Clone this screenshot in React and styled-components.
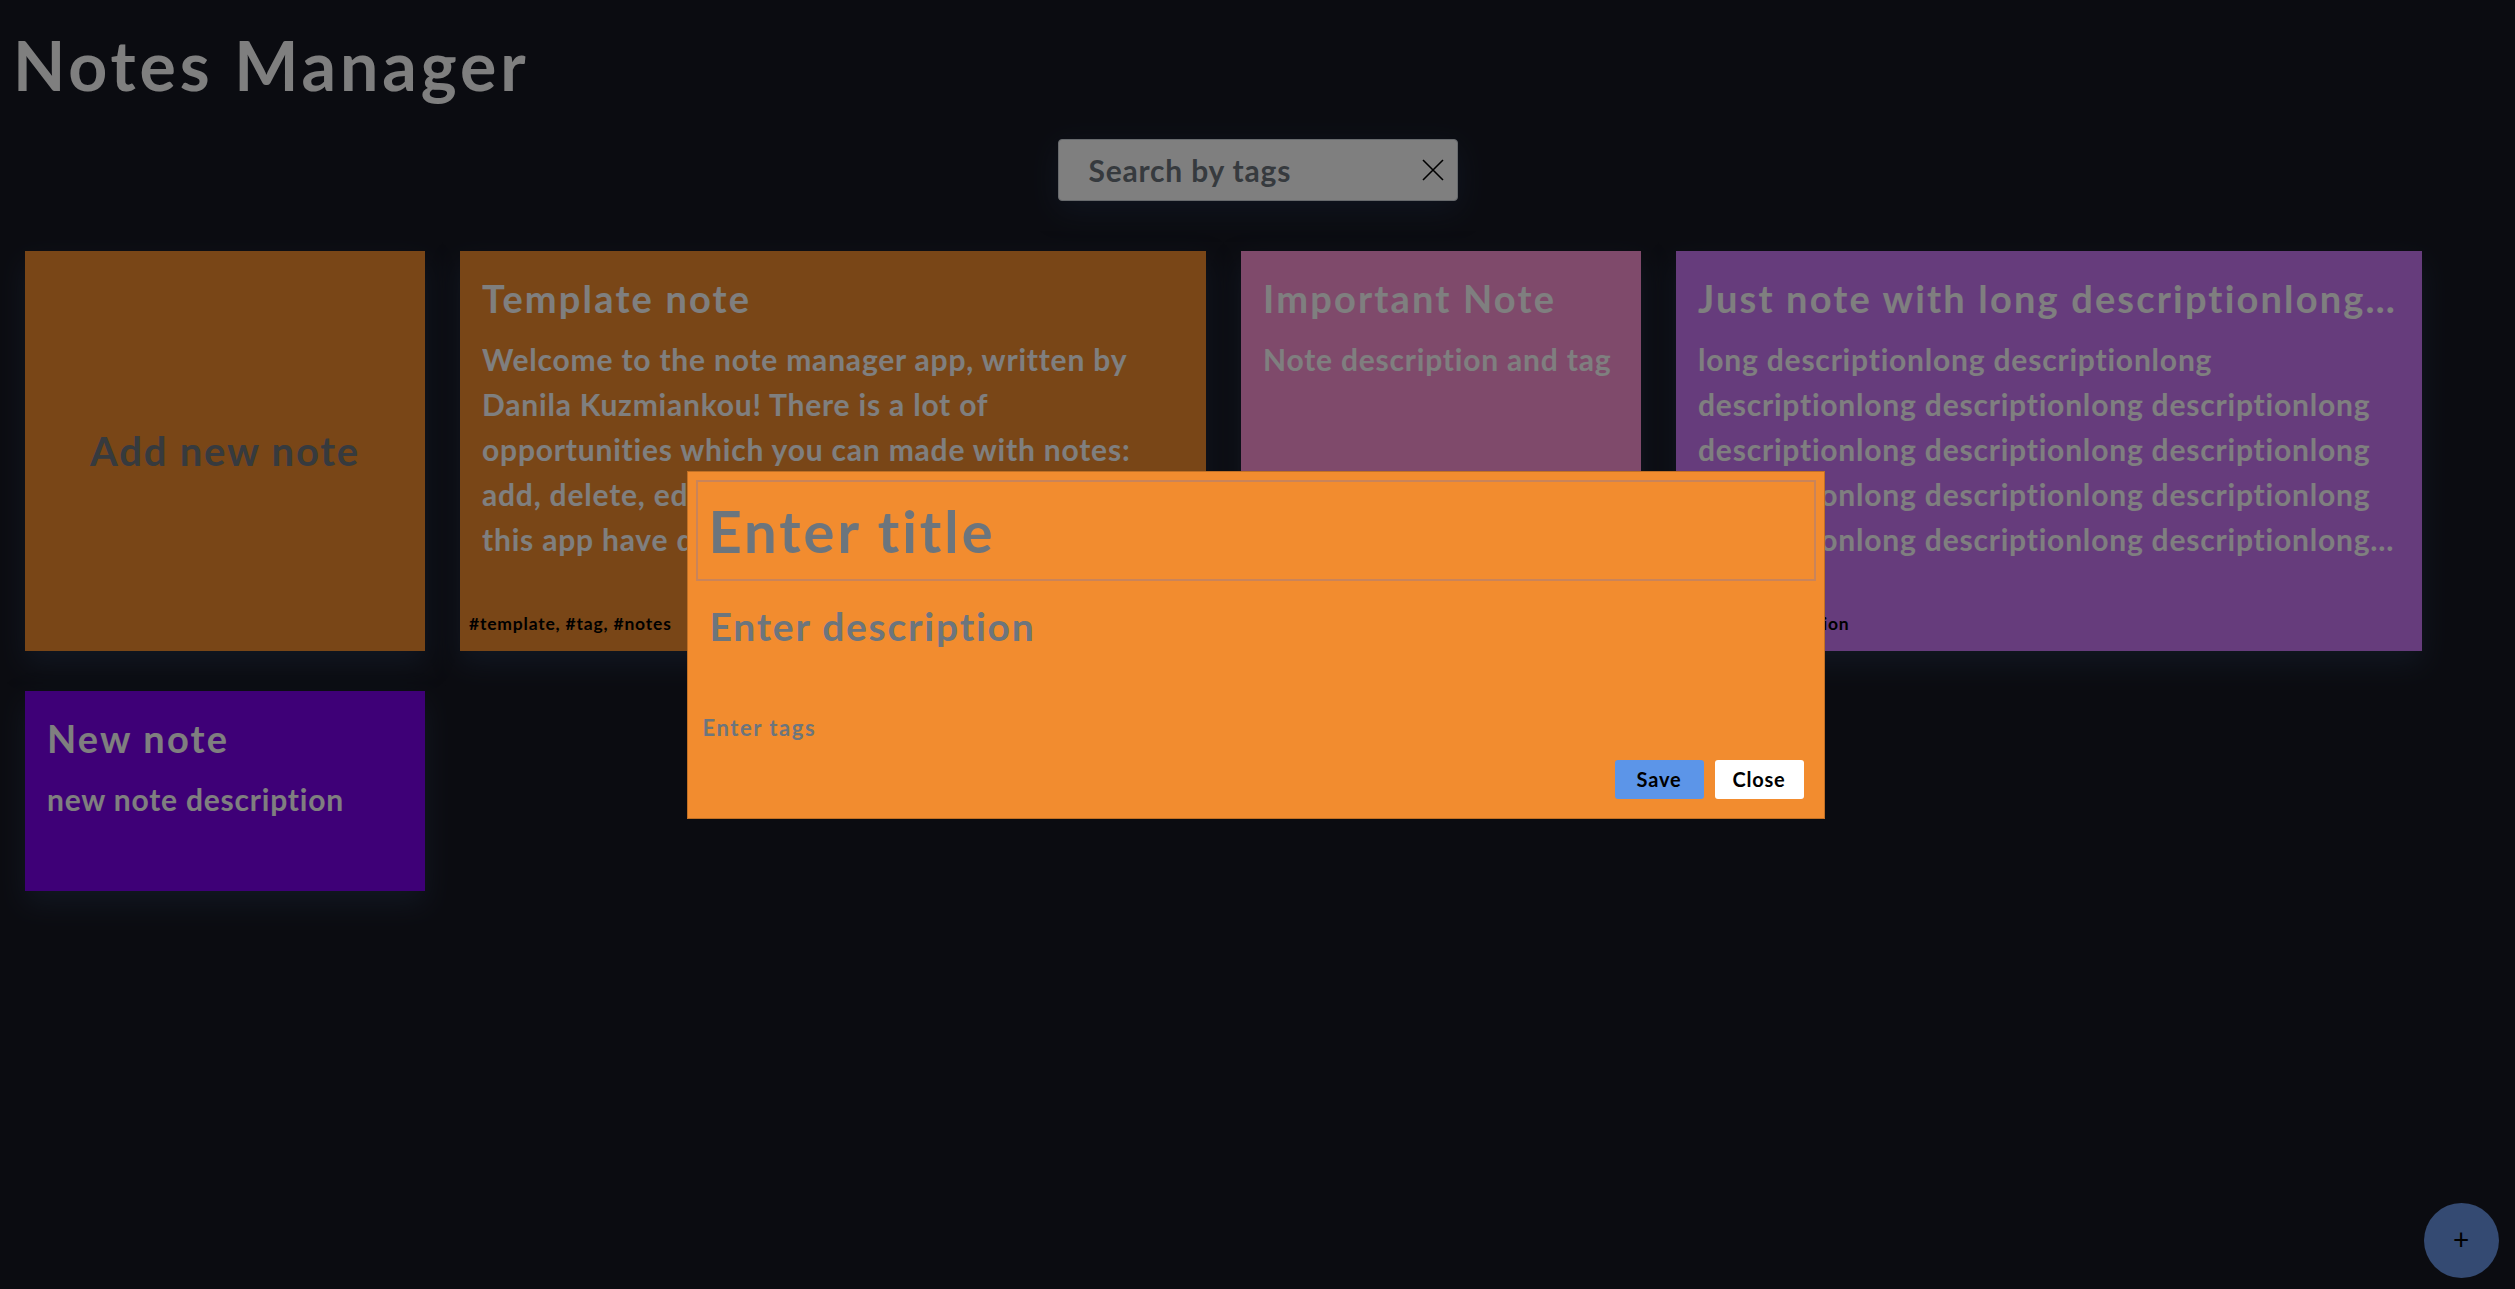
import React from "react";
import styled, { createGlobalStyle } from "styled-components";

const GlobalStyle = createGlobalStyle`
  * { box-sizing: border-box; }
  html, body {
    margin: 0;
    background: #171923;
  }
  body {
    min-height: 100vh;
    font-family: Lato, "Open Sans", sans-serif;
    font-weight: 700;
    letter-spacing: 0.05em;
  }
  input, textarea, button {
    font-family: inherit;
    letter-spacing: inherit;
  }
`;

const notes = [
  {
    id: 1,
    title: "Template note",
    description:
      "Welcome to the note manager app, written by Danila Kuzmiankou! There is a lot of opportunities which you can made with notes: add, delete, edit and filter them by the tags. Also this app have dark theme and many other features which will make your life easier.",
    tags: ["template", "tag", "notes"],
    color: "#f28c2f",
  },
  {
    id: 2,
    title: "Important Note",
    description: "Note description and tag",
    tags: [],
    color: "#fe94d6",
  },
  {
    id: 3,
    title: "Just note with long description" + "long description".repeat(6),
    description: "long description".repeat(24),
    tags: ["long", "description"],
    color: "#cc78f8",
  },
  {
    id: 4,
    title: "New note",
    description: "new note description",
    tags: [],
    color: "#7c00ee",
  },
];

const Page = styled.div`
  padding-bottom: 40px;
`;

const Heading = styled.h1`
  margin: 24px 0 0 13px;
  font-size: 68px;
  line-height: 1.2;
  font-weight: 700;
  letter-spacing: 0.058em;
  color: #fff;
`;

const SearchBar = styled.div`
  width: 400px;
  height: 62px;
  margin: 33px auto 0;
  display: flex;
  align-items: center;
  padding: 0 13px 0 28px;
  background: #fff;
  border: 1px solid #ced4da;
  border-radius: 4px;
  box-shadow: 0 8px 30px rgba(50, 75, 120, 0.35);
`;

const SearchField = styled.input`
  flex: 1;
  min-width: 0;
  border: none;
  outline: none;
  background: transparent;
  font-weight: 700;
  font-size: 30px;
  color: #343a40;

  &::placeholder {
    color: #6c757d;
  }
`;

const ClearButton = styled.button`
  width: 22px;
  height: 22px;
  padding: 0;
  border: none;
  background: none;
  display: flex;
  cursor: pointer;
`;

const NotesGrid = styled.div`
  margin-top: 50px;
  padding: 0 25px;
  display: flex;
  flex-wrap: wrap;
  align-items: stretch;
  gap: 40px 35px;
`;

const AddCard = styled.div`
  width: 400px;
  height: 400px;
  display: flex;
  align-items: center;
  justify-content: center;
  background: #f28c2f;
  color: #6c757d;
  font-size: 40px;
  letter-spacing: 0.045em;
  box-shadow: 0 12px 26px rgba(60, 85, 130, 0.35);
  cursor: pointer;
`;

const Card = styled.div`
  min-width: 400px;
  max-width: 746px;
  min-height: 200px;
  flex-shrink: 0;
  display: flex;
  flex-direction: column;
  background: ${(p) => p.$color};
  color: #fff;
  box-shadow: 0 12px 26px rgba(60, 85, 130, 0.35);
`;

const CardBody = styled.div`
  padding: 25px 22px 0;
  min-width: 0;
`;

const CardTitle = styled.h3`
  margin: 0;
  font-size: 38px;
  line-height: 1.2;
  font-weight: 700;
  letter-spacing: 0.057em;
  white-space: nowrap;
  overflow: hidden;
  text-overflow: ellipsis;
`;

const CardText = styled.p`
  margin: 16px 0 0;
  font-size: 30px;
  line-height: 1.5;
  display: -webkit-box;
  -webkit-line-clamp: 5;
  -webkit-box-orient: vertical;
  overflow: hidden;
`;

const CardTags = styled.div`
  margin-top: auto;
  padding: 12px 9px 17px;
  font-size: 17.5px;
  line-height: 1.2;
  color: #000;
`;

const Fab = styled.button`
  position: fixed;
  right: 16px;
  bottom: 11px;
  width: 75px;
  height: 75px;
  border: none;
  border-radius: 50%;
  background: #6894e4;
  color: #000;
  font-weight: 400;
  font-size: 28px;
  line-height: 1;
  padding: 0 0 3px;
  z-index: 1;
`;

const Backdrop = styled.div`
  position: fixed;
  inset: 0;
  background: rgba(0, 0, 0, 0.5);
  z-index: 10;
`;

const Modal = styled.div`
  position: fixed;
  top: 50%;
  left: 50%;
  transform: translate(calc(-50% - 2px), -50%);
  width: 1138px;
  padding: 8px;
  display: flex;
  flex-direction: column;
  background: #f28c2f;
  border: 1px solid rgba(0, 0, 0, 0.2);
  z-index: 20;
`;

const TitleInput = styled.input`
  width: 100%;
  height: 101px;
  padding: 0 11px;
  border: 2px solid #c9845a;
  background: transparent;
  outline: none;
  font-weight: 700;
  font-size: 58px;
  letter-spacing: 0.05em;
  color: #fff;
  caret-color: #fff;

  &::placeholder {
    color: #6c757d;
  }
`;

const DescriptionInput = styled.textarea`
  width: 100%;
  height: 118px;
  padding: 22px 14px 0;
  border: none;
  outline: none;
  resize: none;
  background: transparent;
  font-weight: 700;
  font-size: 39px;
  line-height: 1.2;
  letter-spacing: 0.045em;
  color: #fff;

  &::placeholder {
    color: #6c757d;
  }
`;

const TagsInput = styled.input`
  width: 100%;
  height: 61px;
  padding: 16px 7px 20px;
  border: none;
  outline: none;
  background: transparent;
  font-weight: 700;
  font-size: 22px;
  letter-spacing: 0.07em;
  color: #fff;

  &::placeholder {
    color: #6c757d;
  }
`;

const ModalFooter = styled.div`
  display: flex;
  justify-content: flex-end;
  gap: 11px;
  padding-right: 12px;
  margin-bottom: 11px;
`;

const ModalButton = styled.button`
  width: 89px;
  height: 39px;
  border: none;
  border-radius: 3px;
  background: ${(p) => (p.$primary ? "#5c95e8" : "#fff")};
  color: #000;
  font-weight: 700;
  font-size: 20px;
  cursor: pointer;
`;

const CloseIcon = () => (
  <svg width="22" height="22" viewBox="0 0 22 22">
    <path d="M1 1L21 21M21 1L1 21" stroke="#000" strokeWidth="1.6" fill="none" />
  </svg>
);

const NoteCard = ({ note }) => (
  <Card $color={note.color}>
    <CardBody>
      <CardTitle>{note.title}</CardTitle>
      <CardText>{note.description}</CardText>
    </CardBody>
    {note.tags.length > 0 && <CardTags>{note.tags.map((t) => "#" + t).join(", ")}</CardTags>}
  </Card>
);

export default function App() {
  return (
    <>
      <GlobalStyle />
      <Page>
        <Heading>Notes Manager</Heading>
        <SearchBar>
          <SearchField placeholder="Search by tags" />
          <ClearButton>
            <CloseIcon />
          </ClearButton>
        </SearchBar>
        <NotesGrid>
          <AddCard>Add new note</AddCard>
          {notes.map((note) => (
            <NoteCard key={note.id} note={note} />
          ))}
        </NotesGrid>
      </Page>
      <Fab>+</Fab>
      <Backdrop />
      <Modal>
        <TitleInput placeholder="Enter title" autoFocus />
        <DescriptionInput placeholder="Enter description" />
        <TagsInput placeholder="Enter tags" />
        <ModalFooter>
          <ModalButton $primary>Save</ModalButton>
          <ModalButton>Close</ModalButton>
        </ModalFooter>
      </Modal>
    </>
  );
}
